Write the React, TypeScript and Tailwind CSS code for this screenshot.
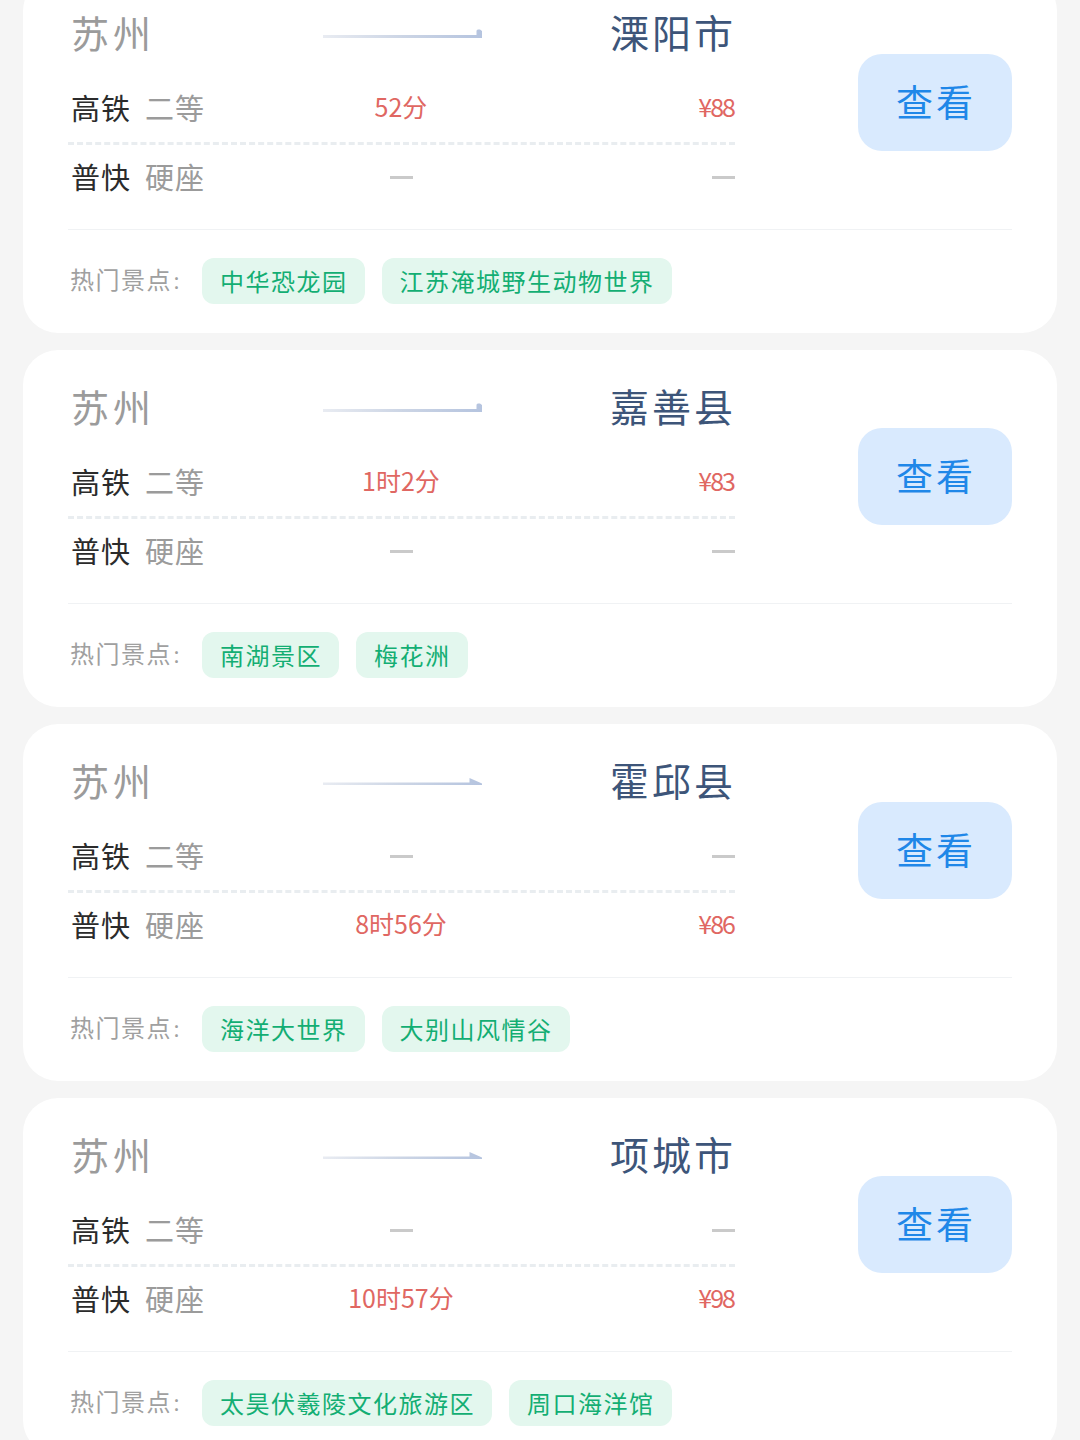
type Fare = { time: string; price: string } | null;

type Trip = {
  to: string;
  arrow: "block" | "wedge";
  fast: Fare;
  slow: Fare;
  spots: string[];
};

const trips: Trip[] = [
  {
    to: "溧阳市",
    arrow: "block",
    fast: { time: "52分", price: "¥88" },
    slow: null,
    spots: ["中华恐龙园", "江苏淹城野生动物世界"],
  },
  {
    to: "嘉善县",
    arrow: "block",
    fast: { time: "1时2分", price: "¥83" },
    slow: null,
    spots: ["南湖景区", "梅花洲"],
  },
  {
    to: "霍邱县",
    arrow: "wedge",
    fast: null,
    slow: { time: "8时56分", price: "¥86" },
    spots: ["海洋大世界", "大别山风情谷"],
  },
  {
    to: "项城市",
    arrow: "wedge",
    fast: null,
    slow: { time: "10时57分", price: "¥98" },
    spots: ["太昊伏羲陵文化旅游区", "周口海洋馆"],
  },
];

function Arrow({ kind, id }: { kind: Trip["arrow"]; id: string }) {
  return (
    <svg width="160" height="12" viewBox="0 0 160 12" className="block">
      <defs>
        <linearGradient id={id} x1="0" x2="160" y1="0" y2="0" gradientUnits="userSpaceOnUse">
          <stop offset="0" stopColor="#e9ecf2" />
          <stop offset="0.5" stopColor="#ccd5e5" />
          <stop offset="1" stopColor="#b5c4df" />
        </linearGradient>
      </defs>
      {kind === "block" ? (
        <path d="M1 8H154.5V4Q154.5 2.500 156 2.500H158L160 4V11H1Z" fill={`url(#${id})`} />
      ) : (
        <path d="M1 7.5H147.500V3L160 8.5V10H1Z" fill={`url(#${id})`} />
      )}
    </svg>
  );
}

function Dash() {
  return <span className="block h-[3px] w-[23px] bg-[#cacaca]" />;
}

function FareRow({ name, seat, fare }: { name: string; seat: string; fare: Fare }) {
  return (
    <div className="grid h-[66px] grid-cols-[1fr_160px_1fr] items-center pb-[2px]">
      <div className="flex items-center gap-[14px] pb-[2px] pl-[3px] text-[29px] tracking-[1px]">
        <span className="text-[#2b2b2b]">{name}</span>
        <span className="text-[#9b9b9b]">{seat}</span>
      </div>
      <div className="flex justify-center whitespace-nowrap pr-[1px] text-[25px] text-[#e06762]">
        {fare ? <span className="pb-[3px]">{fare.time}</span> : <Dash />}
      </div>
      <div className="flex justify-end text-[25px] tracking-[-2px] text-[#e06762]">
        {fare ? <span className="pb-[3px] pr-px">{fare.price}</span> : <Dash />}
      </div>
    </div>
  );
}

function TripCard({ trip, index }: { trip: Trip; index: number }) {
  return (
    <section className="h-[357px] w-full shrink-0 rounded-[35px] bg-white pl-[45px] pr-[45px]">
      <div className="flex h-[253px] items-start justify-between">
        <div className="w-[667px]">
          <div className="grid h-[100px] grid-cols-[1fr_160px_1fr] items-center pt-[14px]">
            <span className="pb-[2px] pl-[3px] text-[38px] tracking-[4px] text-[#9b9b9b]">苏州</span>
            <Arrow kind={trip.arrow} id={`arrow-${index}`} />
            <span className="-mr-[1px] pb-[4px] text-right text-[39px] tracking-[3px] text-[#3d5579]">
              {trip.to}
            </span>
          </div>
          <FareRow name="高铁" seat="二等" fare={trip.fast} />
          <div className="border-t-[3px] border-dashed border-[#e9edf0]" />
          <FareRow name="普快" seat="硬座" fare={trip.slow} />
        </div>
        <button className="mt-[78px] h-[97px] w-[154px] rounded-[24px] bg-[#d9eafe] pb-[3px] pl-[2px] text-[37px] tracking-[3px] text-[#1f87e8]">
          查看
        </button>
      </div>
      <div className="flex items-center border-t border-[#f0f2f4] pt-[28px]">
        <span className="w-[134px] whitespace-nowrap pb-[4px] pl-[2px] text-[24px] tracking-[1.5px] text-[#a0a0a0]">
          热门景点<span className="text-[18px]">：</span>
        </span>
        <div className="flex gap-[17px]">
          {trip.spots.map((spot) => (
            <span
              key={spot}
              className="flex h-[46px] items-center whitespace-nowrap rounded-[12px] bg-[#e3f7ee] pl-[18px] pr-[17px] text-[24px] tracking-[1.5px] text-[#13ae73]"
            >
              {spot}
            </span>
          ))}
        </div>
      </div>
    </section>
  );
}

export default function App() {
  return (
    <main className="h-[1440px] w-[1080px] overflow-hidden bg-[#f5f5f5] px-[23px] font-['Noto_Sans_CJK_SC',sans-serif] leading-none">
      <div className="-mt-[24px] flex flex-col gap-[17px]">
        {trips.map((trip, i) => (
          <TripCard key={trip.to} trip={trip} index={i} />
        ))}
      </div>
    </main>
  );
}
